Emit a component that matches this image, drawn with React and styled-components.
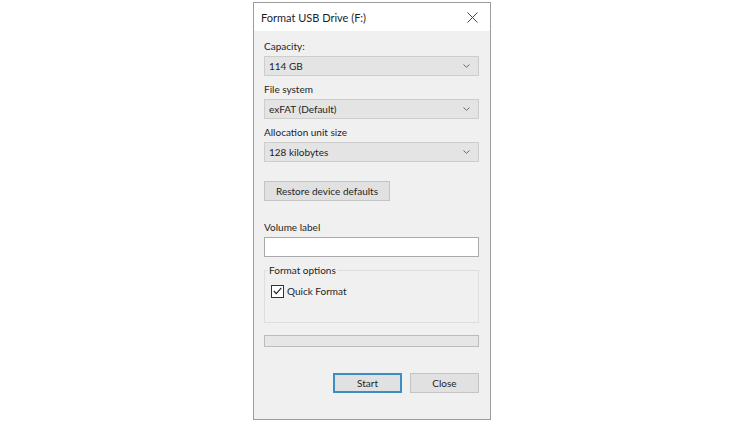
import React, { useState } from 'react';
import styled, { createGlobalStyle } from 'styled-components';

const GlobalStyle = createGlobalStyle`
  body {
    margin: 0;
    background: #ffffff;
    font-family: Lato, "Noto Sans", "DejaVu Sans", sans-serif;
    color: #1e1e1e;
  }
`;

const Window = styled.div`
  box-sizing: border-box;
  width: 238px;
  height: 418px;
  margin: 2px 0 0 253px;
  border: 1px solid #9c9c9c;
  background: #f0f0f0;
  display: flex;
  flex-direction: column;
`;

const TitleBar = styled.div`
  height: 28px;
  flex-shrink: 0;
  background: #ffffff;
  display: flex;
  align-items: center;
  justify-content: space-between;
  padding: 0 12px 0 7px;
  font-size: 11px;
`;

const CloseIcon = styled.svg`
  width: 11px;
  height: 11px;
  display: block;
`;

const Body = styled.div`
  display: flex;
  flex-direction: column;
  padding: 0 11px 0 10px;
  font-size: 10px;
`;

const Label = styled.div`
  line-height: 14px;
  height: 14px;
  margin-top: ${(p) => p.$top || 6}px;
  margin-bottom: 3px;
`;

const Combo = styled.div`
  box-sizing: border-box;
  height: 20px;
  background: #e4e4e4;
  border: 1px solid #cdcdcd;
  display: flex;
  align-items: center;
  justify-content: space-between;
  padding: 0 8px 0 4px;
`;

const Chevron = styled.svg`
  width: 7px;
  height: 4px;
  display: block;
`;

const Button = styled.button`
  box-sizing: border-box;
  width: ${(p) => p.$width}px;
  height: 20px;
  margin: 0;
  padding: 0;
  font: inherit;
  font-size: 10px;
  color: #1e1e1e;
  background: #e1e1e1;
  border: ${(p) => (p.$primary ? '2px solid #3b8dc4' : '1px solid #c4c4c4')};
`;

const RestoreButton = styled(Button)`
  margin-top: 19px;
`;

const TextBox = styled.input`
  box-sizing: border-box;
  height: 20px;
  width: 100%;
  margin: 0;
  background: #ffffff;
  border: 1px solid #aaaaaa;
  outline: none;
`;

const Group = styled.fieldset`
  box-sizing: border-box;
  height: 60px;
  margin: 6px 0 0;
  padding: 0 3px;
  border: 1px solid #dedede;
  min-width: 0;
`;

const Legend = styled.legend`
  padding: 0 1px;
  line-height: 14px;
`;

const CheckRow = styled.label`
  display: flex;
  align-items: center;
  gap: 3px;
  margin: 7px 0 0 3px;
  line-height: 14px;
`;

const Box = styled.span`
  box-sizing: border-box;
  width: 13px;
  height: 13px;
  background: #ffffff;
  border: 1px solid #333333;
  display: flex;
  align-items: center;
  justify-content: center;
`;

const Progress = styled.div`
  box-sizing: border-box;
  height: 12px;
  margin-top: 12px;
  background: #e6e6e6;
  border: 1px solid #bcbcbc;
`;

const Actions = styled.div`
  display: flex;
  justify-content: flex-end;
  gap: 8px;
  margin-top: 26px;
`;

const Select = ({ value }) => (
  <Combo>
    <span>{value}</span>
    <Chevron viewBox="0 0 7 4">
      <path d="M0.5 0.5 L3.5 3.3 L6.5 0.5" fill="none" stroke="#6a6a6a" strokeWidth="1" />
    </Chevron>
  </Combo>
);

export default function App() {
  const [quick, setQuick] = useState(true);

  return (
    <>
      <GlobalStyle />
      <Window>
        <TitleBar>
          <span>Format USB Drive (F:)</span>
          <CloseIcon viewBox="0 0 11 11">
            <path d="M0.5 0.5 L10.5 10.5 M10.5 0.5 L0.5 10.5" stroke="#444444" strokeWidth="1" />
          </CloseIcon>
        </TitleBar>
        <Body>
          <Label $top={8}>Capacity:</Label>
          <Select value="114 GB" />
          <Label>File system</Label>
          <Select value="exFAT (Default)" />
          <Label>Allocation unit size</Label>
          <Select value="128 kilobytes" />
          <RestoreButton $width={126}>Restore device defaults</RestoreButton>
          <Label $top={19}>Volume label</Label>
          <TextBox type="text" />
          <Group>
            <Legend>Format options</Legend>
            <CheckRow onClick={() => setQuick(!quick)}>
              <Box>
                {quick && (
                  <svg width="9" height="8" viewBox="0 0 9 8">
                    <path d="M0.8 4 L3.3 6.6 L8.3 0.8" fill="none" stroke="#222222" strokeWidth="1.1" />
                  </svg>
                )}
              </Box>
              Quick Format
            </CheckRow>
          </Group>
          <Progress />
          <Actions>
            <Button $width={69} $primary>Start</Button>
            <Button $width={69}>Close</Button>
          </Actions>
        </Body>
      </Window>
    </>
  );
}
